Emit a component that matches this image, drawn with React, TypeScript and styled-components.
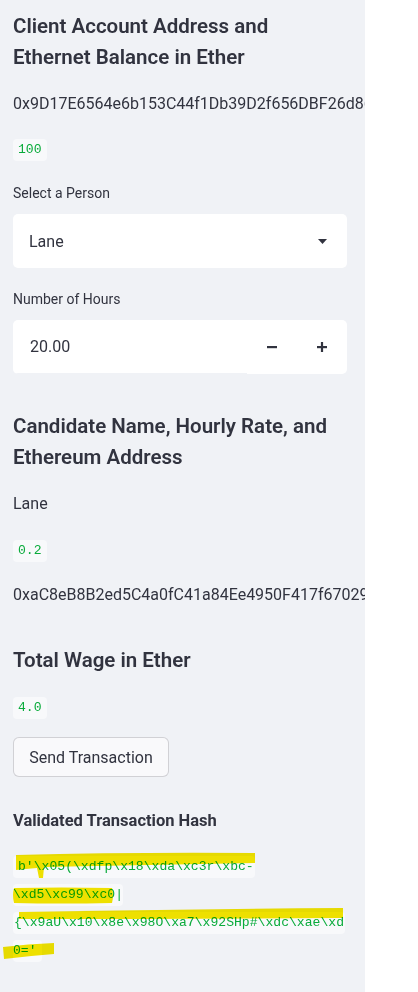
import React from "react";
import styled, { createGlobalStyle } from "styled-components";

const GlobalStyle = createGlobalStyle`
  html, body { margin: 0; padding: 0; background: #ffffff; }
  body {
    font-family: Roboto, "Liberation Sans", sans-serif;
    color: #31333f;
    -webkit-font-smoothing: antialiased;
  }
  * { box-sizing: border-box; }
`;

const Page = styled.div`
  display: flex;
  width: 418px;
  min-height: 992px;
  background: #ffffff;
`;

const Sidebar = styled.aside`
  width: 365px;
  min-height: 992px;
  background: #f0f2f6;
  padding: 0 18px 0 13px;
  overflow: hidden;
  display: flex;
  flex-direction: column;
`;

const Heading = styled.h3<{ $top: number }>`
  margin: ${(p) => p.$top}px 0 0;
  font-size: 20.5px;
  font-weight: 600;
  line-height: 31px;
  color: #31333f;
  letter-spacing: 0;
`;

const Text = styled.p<{ $top: number }>`
  margin: ${(p) => p.$top}px 0 0;
  font-size: 16px;
  line-height: 26px;
  white-space: nowrap;
  color: #31333f;
`;

const ChipRow = styled.div<{ $top: number }>`
  margin-top: ${(p) => p.$top}px;
  display: flex;
  height: 22px;
`;

const CodeChip = styled.code<{ $padL?: number; $padR?: number }>`
  display: inline-block;
  height: 22px;
  line-height: 22px;
  padding: 0 ${(p) => p.$padR ?? 5}px 0 ${(p) => p.$padL ?? 5}px;
  background: #f8f9fb;
  border-radius: 4px;
  font-family: "Liberation Mono", "DejaVu Sans Mono", monospace;
  font-size: 13.1px;
  color: #09ab3b;
  white-space: pre;
`;

const Label = styled.label<{ $top: number }>`
  display: block;
  margin-top: ${(p) => p.$top}px;
  font-size: 14px;
  line-height: 20px;
  color: #31333f;
`;

const SelectBox = styled.div`
  margin-top: 11px;
  height: 54px;
  background: #ffffff;
  border-radius: 5px;
  display: flex;
  align-items: center;
  justify-content: space-between;
  padding: 0 20px 0 16px;
  font-size: 16px;
`;

const NumberBox = styled.div`
  margin-top: 11px;
  height: 54px;
  background: #ffffff;
  border-radius: 5px;
  display: flex;
  align-items: stretch;
  overflow: hidden;
`;

const NumberValue = styled.div`
  flex: 1;
  display: flex;
  align-items: center;
  padding-left: 17px;
  font-size: 16px;
  border-bottom: 1px solid #f0f2f6;
`;

const StepButton = styled.div`
  width: 50px;
  display: flex;
  align-items: center;
  justify-content: center;
  color: #31333f;
`;

const Button = styled.button`
  margin-top: 18px;
  align-self: flex-start;
  height: 40px;
  width: 156px;
  padding: 0;
  background: #f9f9fb;
  border: 1px solid rgba(49, 51, 63, 0.2);
  border-radius: 6px;
  font-family: Roboto, "Liberation Sans", sans-serif;
  font-size: 16px;
  color: #31333f;
`;

const SubHeading = styled.div`
  margin-top: 32px;
  font-size: 16.5px;
  font-weight: 700;
  line-height: 24px;
  color: #31333f;
`;

const HashBlock = styled.div`
  position: relative;
  margin-top: 20px;
  display: flex;
  flex-direction: column;
`;

const HashLine = styled.div`
  height: 28px;
  display: flex;
  align-items: center;
`;

const Highlights = styled.svg`
  position: absolute;
  left: -13px;
  top: 0;
  width: 365px;
  height: 112px;
  pointer-events: none;
  mix-blend-mode: multiply;
  overflow: visible;
`;

const Caret = () => (
  <svg width="9" height="5" viewBox="0 0 9 5">
    <path d="M0 0 H9 L4.5 5 Z" fill="#31333f" />
  </svg>
);

const Minus = () => (
  <svg width="10" height="10" viewBox="0 0 10 10">
    <rect x="0" y="4" width="10" height="2.2" fill="#31333f" />
  </svg>
);

const Plus = () => (
  <svg width="10" height="10" viewBox="0 0 10 10">
    <rect x="0" y="4" width="10" height="2.2" fill="#31333f" />
    <rect x="3.9" y="0" width="2.2" height="10" fill="#31333f" />
  </svg>
);

export default function App() {
  return (
    <>
      <GlobalStyle />
      <Page>
        <Sidebar>
          <Heading $top={11}>
            Client Account Address and
            <br />
            Ethernet Balance in Ether
          </Heading>
          <Text $top={18}>0x9D17E6564e6b153C44f1Db39D2f656DBF26d86a6</Text>
          <ChipRow $top={22}>
            <CodeChip>100</CodeChip>
          </ChipRow>

          <Label $top={22}>Select a Person</Label>
          <SelectBox>
            <span>Lane</span>
            <Caret />
          </SelectBox>

          <Label $top={21}>Number of Hours</Label>
          <NumberBox>
            <NumberValue>20.00</NumberValue>
            <StepButton>
              <Minus />
            </StepButton>
            <StepButton>
              <Plus />
            </StepButton>
          </NumberBox>

          <Heading $top={37}>
            Candidate Name, Hourly Rate, and
            <br />
            Ethereum Address
          </Heading>
          <Text $top={18}>Lane</Text>
          <ChipRow $top={23}>
            <CodeChip>0.2</CodeChip>
          </ChipRow>
          <Text $top={20}>0xaC8eB8B2ed5C4a0fC41a84Ee4950F417f67029F0</Text>

          <Heading $top={37}>Total Wage in Ether</Heading>
          <ChipRow $top={21}>
            <CodeChip>4.0</CodeChip>
          </ChipRow>

          <Button type="button">Send Transaction</Button>

          <SubHeading>Validated Transaction Hash</SubHeading>
          <HashBlock>
            <HashLine>
              <CodeChip $padR={1}>{"b'\\x05(\\xdfp\\x18\\xda\\xc3r\\xbc-"}</CodeChip>
            </HashLine>
            <HashLine>
              <CodeChip $padL={0} $padR={0}>{"\\xd5\\xc99\\xc0|"}</CodeChip>
            </HashLine>
            <HashLine>
              <CodeChip $padL={1} $padR={1}>{"{\\x9aU\\x10\\x8e\\x98O\\xa7\\x92SHp#\\xdc\\xae\\xd"}</CodeChip>
            </HashLine>
            <HashLine>
              <CodeChip $padL={0}>{"0='"}</CodeChip>
            </HashLine>
            <Highlights viewBox="0 0 365 112">
              <g fill="#f5e600">
                <path d="M16 2 Q130 -1 255 0 L255 10 Q150 12 44 14 L43 25 L39 25 L37 15 Q25 16 16 17 Z" />
                <path d="M14 35 Q60 34 112 35 Q114 42 112 50 Q60 51 14 50 Q12 42 14 35 Z" />
                <path d="M19 59 Q180 56 343 55 L343 65 Q180 66 19 66 Z" />
                <path d="M3 94 Q28 91 54 90 L54 101 Q28 103 4 106 Z" />
              </g>
            </Highlights>
          </HashBlock>
        </Sidebar>
      </Page>
    </>
  );
}
